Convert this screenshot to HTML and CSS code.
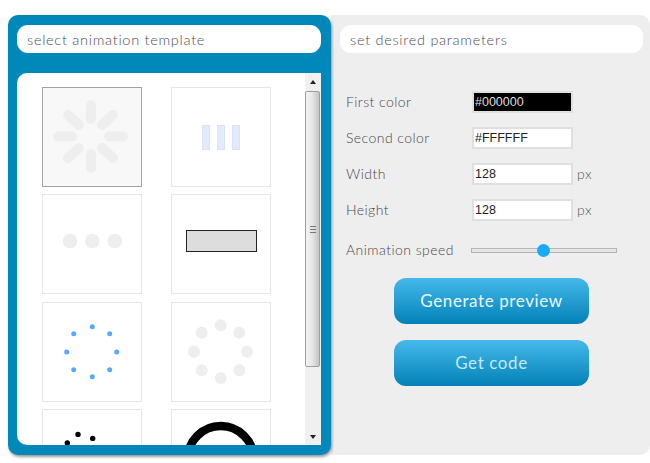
FILE: index.html
```html
<!DOCTYPE html>
<html lang="en">
<head>
<meta charset="utf-8">
<title>Animation generator</title>
<link rel="stylesheet" href="styles.css">
</head>
<body>
<main class="app">
  <section class="left">
    <div class="pill">select animation template</div>
    <div class="list">
      <div class="grid">
        <div class="cell selected">
          <svg viewBox="1 1 98 98" class="fill">
            <g stroke="#eeeeee" stroke-width="10" stroke-linecap="round" fill="none">
              <path d="M49 18V32M49 67V81M16 49.500H30M67 49.500H81M26 28L37 38M60 61L71 71M71 28L60 38M37 61L26 71"/>
            </g>
          </svg>
        </div>
        <div class="cell">
          <svg viewBox="1 1 98 98" class="fill">
            <g fill="#e2eafb" stroke="#dbe3f2">
              <rect x="31.500" y="38.500" width="7" height="24"/>
              <rect x="46.500" y="38.500" width="7" height="24"/>
              <rect x="61.500" y="38.500" width="7" height="24"/>
            </g>
          </svg>
        </div>
        <div class="cell">
          <svg viewBox="1 1 98 98" class="fill">
            <g fill="#eeeeee"><circle cx="28" cy="47" r="7.300"/><circle cx="50.300" cy="47" r="7.300"/><circle cx="72.700" cy="47" r="7.300"/></g>
          </svg>
        </div>
        <div class="cell">
          <svg viewBox="1 1 98 98" class="fill">
            <rect x="15.500" y="36.500" width="70" height="21" fill="#dddddd" stroke="#222222"/>
          </svg>
        </div>
        <div class="cell">
          <svg viewBox="1 1 98 98" class="fill">
            <g fill="#55aaff"><circle cx="50.300" cy="24.700" r="2.500"/><circle cx="31.700" cy="31.700" r="2.500"/><circle cx="67.700" cy="31.700" r="2.500"/><circle cx="24.700" cy="50" r="2.500"/><circle cx="74.700" cy="50" r="2.500"/><circle cx="31.700" cy="67.700" r="2.500"/><circle cx="67.700" cy="67.700" r="2.500"/><circle cx="50.300" cy="74.700" r="2.500"/></g>
          </svg>
        </div>
        <div class="cell">
          <svg viewBox="1 1 98 98" class="fill">
            <g fill="#eeeeee"><circle cx="49.700" cy="23.300" r="6"/><circle cx="30.700" cy="30.700" r="6"/><circle cx="68.300" cy="30.700" r="6"/><circle cx="23" cy="49.700" r="6"/><circle cx="76" cy="49.700" r="6"/><circle cx="30.700" cy="68.300" r="6"/><circle cx="68.300" cy="68.300" r="6"/><circle cx="49.700" cy="76" r="6"/></g>
          </svg>
        </div>
        <div class="cell">
          <svg viewBox="1 1 98 98" class="fill">
            <g fill="#000000"><circle cx="36" cy="25.400" r="2.700"/><circle cx="50.700" cy="29.400" r="2.700"/><circle cx="25.300" cy="34" r="2.700"/></g>
          </svg>
        </div>
        <div class="cell">
          <svg viewBox="1 1 98 98" class="fill">
            <circle cx="49.700" cy="50" r="33" fill="none" stroke="#000000" stroke-width="8.400"/>
          </svg>
        </div>
      </div>
      <div class="scrollbar">
        <div class="arrow up"></div>
        <div class="thumb"><span class="grip"></span></div>
        <div class="arrow down"></div>
      </div>
    </div>
  </section>
  <section class="right">
    <div class="pill">set desired parameters</div>
    <form class="params">
      <div class="row"><label>First color</label><input class="field black" value="#000000"></div>
      <div class="row"><label>Second color</label><input class="field" value="#FFFFFF"></div>
      <div class="row"><label>Width</label><input class="field" value="128"><span class="unit">px</span></div>
      <div class="row"><label>Height</label><input class="field" value="128"><span class="unit">px</span></div>
      <div class="row speed"><label>Animation speed</label><div class="track"><span class="knob"></span></div></div>
      <div class="actions">
        <button type="button" class="btn">Generate preview</button>
        <button type="button" class="btn dim">Get code</button>
      </div>
    </form>
  </section>
</main>
</body>
</html>
```

FILE: styles.css
```css
* { box-sizing: border-box; }
html, body { margin: 0; height: 463px; overflow: hidden; background: #ffffff; }
body { font-family: "Lato", "Liberation Sans", sans-serif; font-weight: 300; color: #555555; }
.app { display: flex; padding: 15px 0 0 8px; height: 456px; }
.left {
  position: relative; z-index: 1;
  width: 323px; height: 440px; padding: 10px 10px 10px 9px;
  background: #0088bb; border-radius: 10px;
  box-shadow: 1px 2px 3px rgba(0,0,0,.4);
}
.pill {
  height: 28px; line-height: 29px; padding-left: 10px;
  background: #ffffff; border-radius: 11px;
  font-size: 14.500px; letter-spacing: .72px; color: #4c4c56;
}
.list {
  display: flex; height: 372px; margin-top: 20px; overflow: hidden;
  background: #ffffff; border-radius: 10px 0 0 10px;
}
.grid {
  flex: 1; display: grid; grid-template-columns: 100px 100px; grid-auto-rows: 100px;
  column-gap: 29px; row-gap: 7.400px; padding: 14px 0 0 25px; overflow: hidden;
}
.cell { border: 1px solid #e6e6e6; background: #ffffff; }
.cell.selected { border-color: #a2a2a2; background: #f8f8f8; }
.fill { display: block; width: 100%; height: 100%; }
.scrollbar {
  width: 16px; flex: none; display: flex; flex-direction: column;
  background: #f0f0f0; align-items: flex-start;
}
.arrow { height: 18px; width: 100%; flex: none; position: relative; }
.arrow::after {
  content: ""; position: absolute; left: 5px; top: 7px;
  border-left: 3px solid transparent; border-right: 3px solid transparent;
}
.arrow.up::after { border-bottom: 4px solid #222222; }
.arrow.down { margin-top: auto; }
.arrow.down::after { border-top: 4px solid #222222; top: 8px; }
.thumb {
  width: 15px; height: 276px; display: flex; align-items: center; justify-content: center;
  border: 1px solid #9e9e9e; border-radius: 2px;
  background: linear-gradient(90deg, #f4f4f4, #e8e8e8 45%, #c4c4c4);
}
.grip { width: 6px; height: 7px; border-top: 1px solid #777; border-bottom: 1px solid #777; position: relative; }
.grip::after { content: ""; position: absolute; left: 0; right: 0; top: 2px; border-top: 1px solid #777; }
.right {
  flex: 1; height: 440px; padding: 10px 7px 0 9px;
  background: #eeeeee; border-radius: 0 10px 10px 0;
}
.params { padding: 31px 0 0 6px; }
.row { display: flex; align-items: center; height: 36px; font-size: 14px; letter-spacing: .45px; color: #484848; }
.row label { width: 126px; flex: none; padding-bottom: 2px; }
.field {
  width: 101px; height: 22px; padding: 0 0 0 1px; margin: 0;
  border: 2px solid #dfdfdf; background: #ffffff; color: #222222;
  font-family: "Liberation Sans", sans-serif; font-size: 12.500px;
}
.field.black { background: #000000; color: #dddddd; }
.unit { margin-left: 4px; padding-bottom: 2px; color: #555555; }
.speed { height: 44px; }
.speed label { width: 125px; }
.track {
  position: relative; width: 146px; height: 5px;
  background: #e6e6e6; border: 1px solid #b4b4b4;
}
.knob {
  position: absolute; left: 65px; top: -5px; width: 13px; height: 13px;
  border-radius: 50%; background: #18abf7;
}
.actions { display: flex; flex-direction: column; gap: 16px; align-items: flex-start; padding: 5.500px 0 0 48px; }
.btn {
  width: 195px; height: 46px; border: 0; border-radius: 12px;
  background: linear-gradient(#45b9ea, #0381b7);
  font-family: inherit; font-weight: 400; font-size: 17px; letter-spacing: .6px; color: #eaf8fe;
}
.btn.dim { color: #c4eafa; }
```
